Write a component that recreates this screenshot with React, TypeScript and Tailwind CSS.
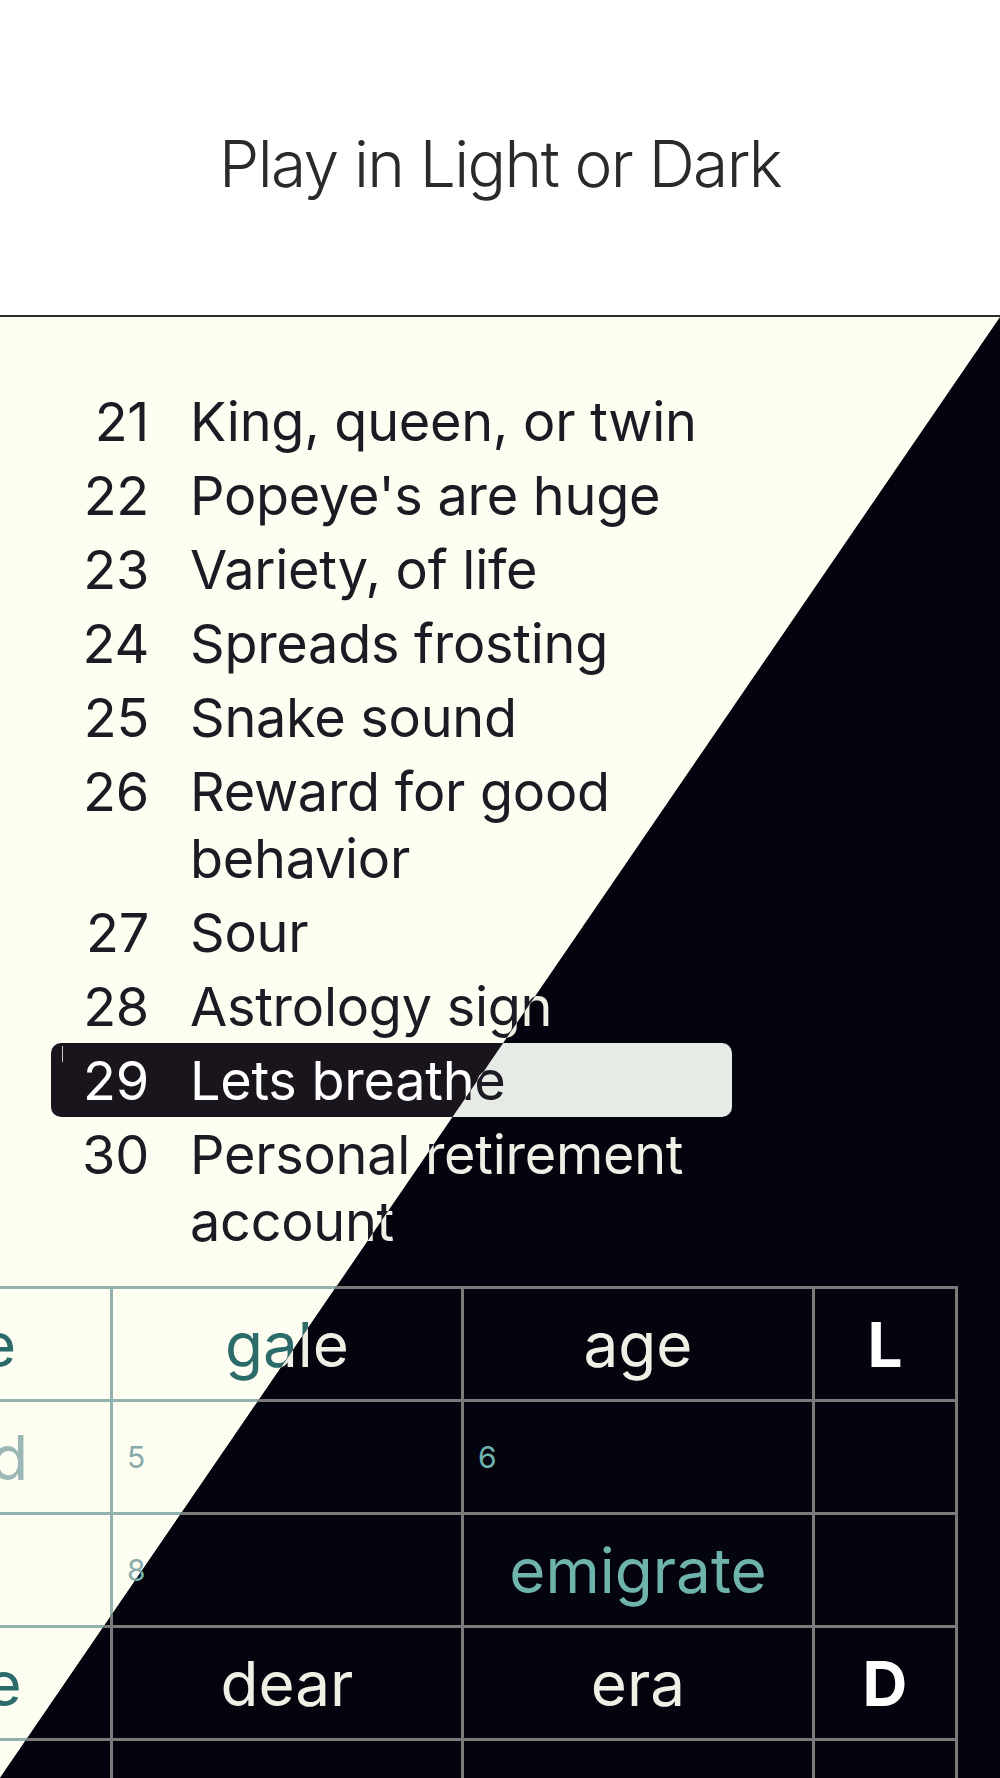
import React from "react";

interface IClue {
    n: number
    text: string
    active?: boolean
}

type CellState = 'filled' | 'ghost' | 'letter' | 'number' | 'empty';

interface ICell {
    value?: string
    state: CellState
}

const clues: IClue[] = [
    {n: 21, text: "King, queen, or twin"},
    {n: 22, text: "Popeye's are huge"},
    {n: 23, text: "Variety, of life"},
    {n: 24, text: "Spreads frosting"},
    {n: 25, text: "Snake sound"},
    {n: 26, text: "Reward for good behavior"},
    {n: 27, text: "Sour"},
    {n: 28, text: "Astrology sign"},
    {n: 29, text: "Lets breathe", active: true},
    {n: 30, text: "Personal retirement account"},
];

const grid: ICell[][] = [
    [{value: "stage", state: 'filled'}, {value: "gale", state: 'filled'}, {value: "age", state: 'filled'}, {value: "L", state: 'letter'}],
    [{value: "bound", state: 'ghost'}, {value: "5", state: 'number'}, {value: "6", state: 'number'}, {state: 'empty'}],
    [{state: 'empty'}, {value: "8", state: 'number'}, {value: "emigrate", state: 'ghost'}, {state: 'empty'}],
    [{value: "whale", state: 'filled'}, {value: "dear", state: 'filled'}, {value: "era", state: 'filled'}, {value: "D", state: 'letter'}],
    [{state: 'empty'}, {state: 'empty'}, {state: 'empty'}, {state: 'empty'}],
];

function cellText(cell: ICell, dark: boolean) {
    if (cell.state === 'empty' || !cell.value) return null;
    if (cell.state === 'number') {
        return (
            <span className={`self-center pl-[14px] text-[30px] ${dark ? 'text-[#6fb3ad]' : 'text-[#8aabab]'}`}>
                {cell.value}
            </span>
        );
    }
    if (cell.state === 'letter') {
        return (
            <span className={`w-full text-center text-[62px] font-bold ${dark ? 'text-white' : 'text-[#1c1a22]'}`}>
                {cell.value}
            </span>
        );
    }
    const color = cell.state === 'filled'
        ? (dark ? 'text-[#eef0e6]' : 'text-[#2b6b69]')
        : (dark ? 'text-[#6fb3ad]' : 'text-[#9bb8b7]');
    return <span className={`w-full text-center text-[62px] whitespace-nowrap ${color}`}>{cell.value}</span>;
}

function Board({dark}: { dark: boolean }) {
    return (
        <div className={`h-full w-full pt-[67px] ${dark ? 'bg-[#04040e]' : 'bg-[#fdfdf2]'}`}>
            <div className="ml-[51px] w-[681px] flex flex-col">
                {clues.map(clue => {
                    let rowColor = dark ? 'text-[#eef0e6]' : 'text-[#1c1a22]';
                    let rowBg = '';
                    if (clue.active) {
                        rowColor = dark ? 'text-[#1c1a22]' : 'text-white';
                        rowBg = dark ? 'bg-[#e6ebe5]' : 'bg-[#1a141c]';
                    }
                    return (
                        <div key={clue.n}
                             className={`relative flex py-[3.5px] text-[54px] leading-[67px] tracking-[-0.005em] rounded-[10px] ${rowColor} ${rowBg}`}>
                            <span className="w-[98px] shrink-0 text-right">{clue.n}</span>
                            <span className="ml-[41px] flex-1">{clue.text}</span>
                            {clue.active && !dark &&
                                <span className="absolute left-[11px] top-[3px] h-[16px] w-px bg-[#c8c8c8]"/>}
                        </div>
                    );
                })}
            </div>

            <div className={`mt-[28px] -ml-[243px] w-[1201px] grid grid-cols-[350px_348px_348px_140px] auto-rows-[110px] gap-[3px] p-[3px] ${dark ? 'bg-[#7a7a7a]' : 'bg-[#92b2af]'}`}>
                {grid.flat().map((cell, i) => (
                    <div key={i} className={`flex items-center overflow-hidden ${dark ? 'bg-[#04040e]' : 'bg-[#fdfdf2]'}`}>
                        {cellText(cell, dark)}
                    </div>
                ))}
            </div>
        </div>
    );
}

export default function App() {
    return (
        <div className="w-[1000px] h-[1778px] overflow-hidden bg-white font-['Inter',sans-serif]">
            <header className="h-[315px] flex items-center justify-center pt-[12px]">
                <h1 className="text-[64px] font-light tracking-[-0.025em] text-[#2a2a2a]">Play in Light or Dark</h1>
            </header>
            <div className="h-[2px] bg-[#2a2a2a]"/>
            <div className="relative h-[1461px] overflow-hidden">
                <Board dark={false}/>
                <div className="absolute inset-0 [clip-path:polygon(100%_0,100%_100%,0_100%)]">
                    <Board dark={true}/>
                </div>
            </div>
        </div>
    );
}
